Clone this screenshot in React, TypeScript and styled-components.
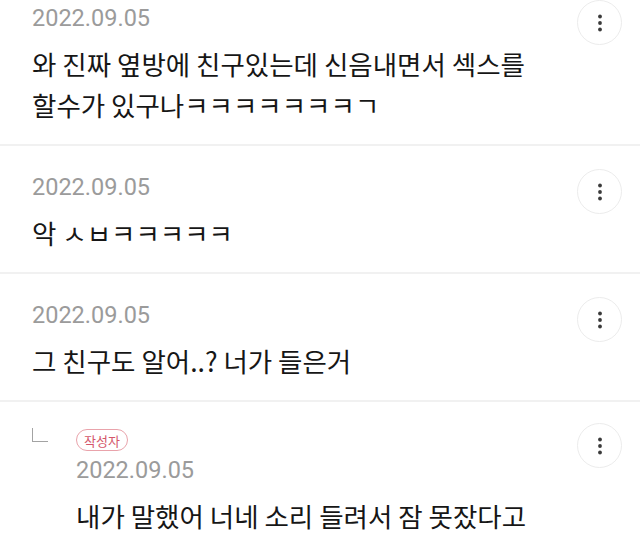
import React from 'react'
import styled, { createGlobalStyle } from 'styled-components'

type Comment = {
  date: string
  lines: string[]
  reply?: boolean
  author?: boolean
}

const comments: Comment[] = [
  { date: '2022.09.05', lines: ['와 진짜 옆방에 친구있는데 신음내면서 섹스를', '할수가 있구나ㅋㅋㅋㅋㅋㅋㅋㄱ'] },
  { date: '2022.09.05', lines: ['악 ㅅㅂㅋㅋㅋㅋㅋ'] },
  { date: '2022.09.05', lines: ['그 친구도 알어..? 너가 들은거'] },
  { date: '2022.09.05', lines: ['내가 말했어 너네 소리 들려서 잠 못잤다고'], reply: true, author: true },
]

const MoreIcon = () => (
  <svg width="8" height="20" viewBox="0 0 8 20">
    <circle cx="4" cy="3.5" r="1.9" fill="#3a3a3a" />
    <circle cx="4" cy="10" r="1.9" fill="#3a3a3a" />
    <circle cx="4" cy="16.5" r="1.9" fill="#3a3a3a" />
  </svg>
)

const App = () => {
  return (
    <>
      <GlobalStyle />
      <List>
        {comments.map((c, i) => (
          <Item key={i} $reply={c.reply}>
            {c.reply && <ReplyMark />}
            <Content>
              {c.author && <AuthorBadge>작성자</AuthorBadge>}
              <DateText>{c.date}</DateText>
              <Body>
                {c.lines.map((l) => (
                  <div key={l}>{l}</div>
                ))}
              </Body>
            </Content>
            <MoreButton>
              <MoreIcon />
            </MoreButton>
          </Item>
        ))}
      </List>
    </>
  )
}

export default App

const GlobalStyle = createGlobalStyle`
  body {
    margin: 0;
    background: #fff;
    font-family: "Noto Sans CJK KR", "Noto Sans", sans-serif;
    overflow: hidden;
  }
`
const List = styled.div`
  margin-top: -23px;
`
const Item = styled.div<{ $reply?: boolean }>`
  display: flex;
  align-items: flex-start;
  padding: ${(p) => (p.$reply ? '27px' : '29px')} 18px 19px 32px;
  border-bottom: 2px solid #f1f1f1;
`
const ReplyMark = styled.div`
  width: 15px;
  height: 13px;
  margin: -1px 28px 0 0;
  border-left: 1.5px solid #a3a3a3;
  border-bottom: 1.5px solid #a3a3a3;
  flex-shrink: 0;
`
const Content = styled.div`
  flex: 1;
  display: flex;
  flex-direction: column;
  align-items: flex-start;
`
const AuthorBadge = styled.span`
  display: inline-flex;
  align-items: center;
  justify-content: center;
  height: 22px;
  padding: 0 7px;
  border: 1px solid #e9a3ab;
  border-radius: 12px;
  box-sizing: border-box;
  color: #d4566a;
  font-size: 13px;
  line-height: 1;
  margin-bottom: 7px;
`
const DateText = styled.div`
  font-family: Roboto, "Liberation Sans", sans-serif;
  font-size: 23.5px;
  line-height: 24px;
  color: #9b9b9b;
`
const Body = styled.div`
  margin-top: 13px;
  font-size: 26.5px;
  line-height: 41px;
  color: #161616;
`
const MoreButton = styled.div`
  width: 45px;
  height: 45px;
  margin-top: -6px;
  border: 1px solid #ececec;
  border-radius: 50%;
  box-sizing: border-box;
  display: flex;
  align-items: center;
  justify-content: center;
  flex-shrink: 0;
`
